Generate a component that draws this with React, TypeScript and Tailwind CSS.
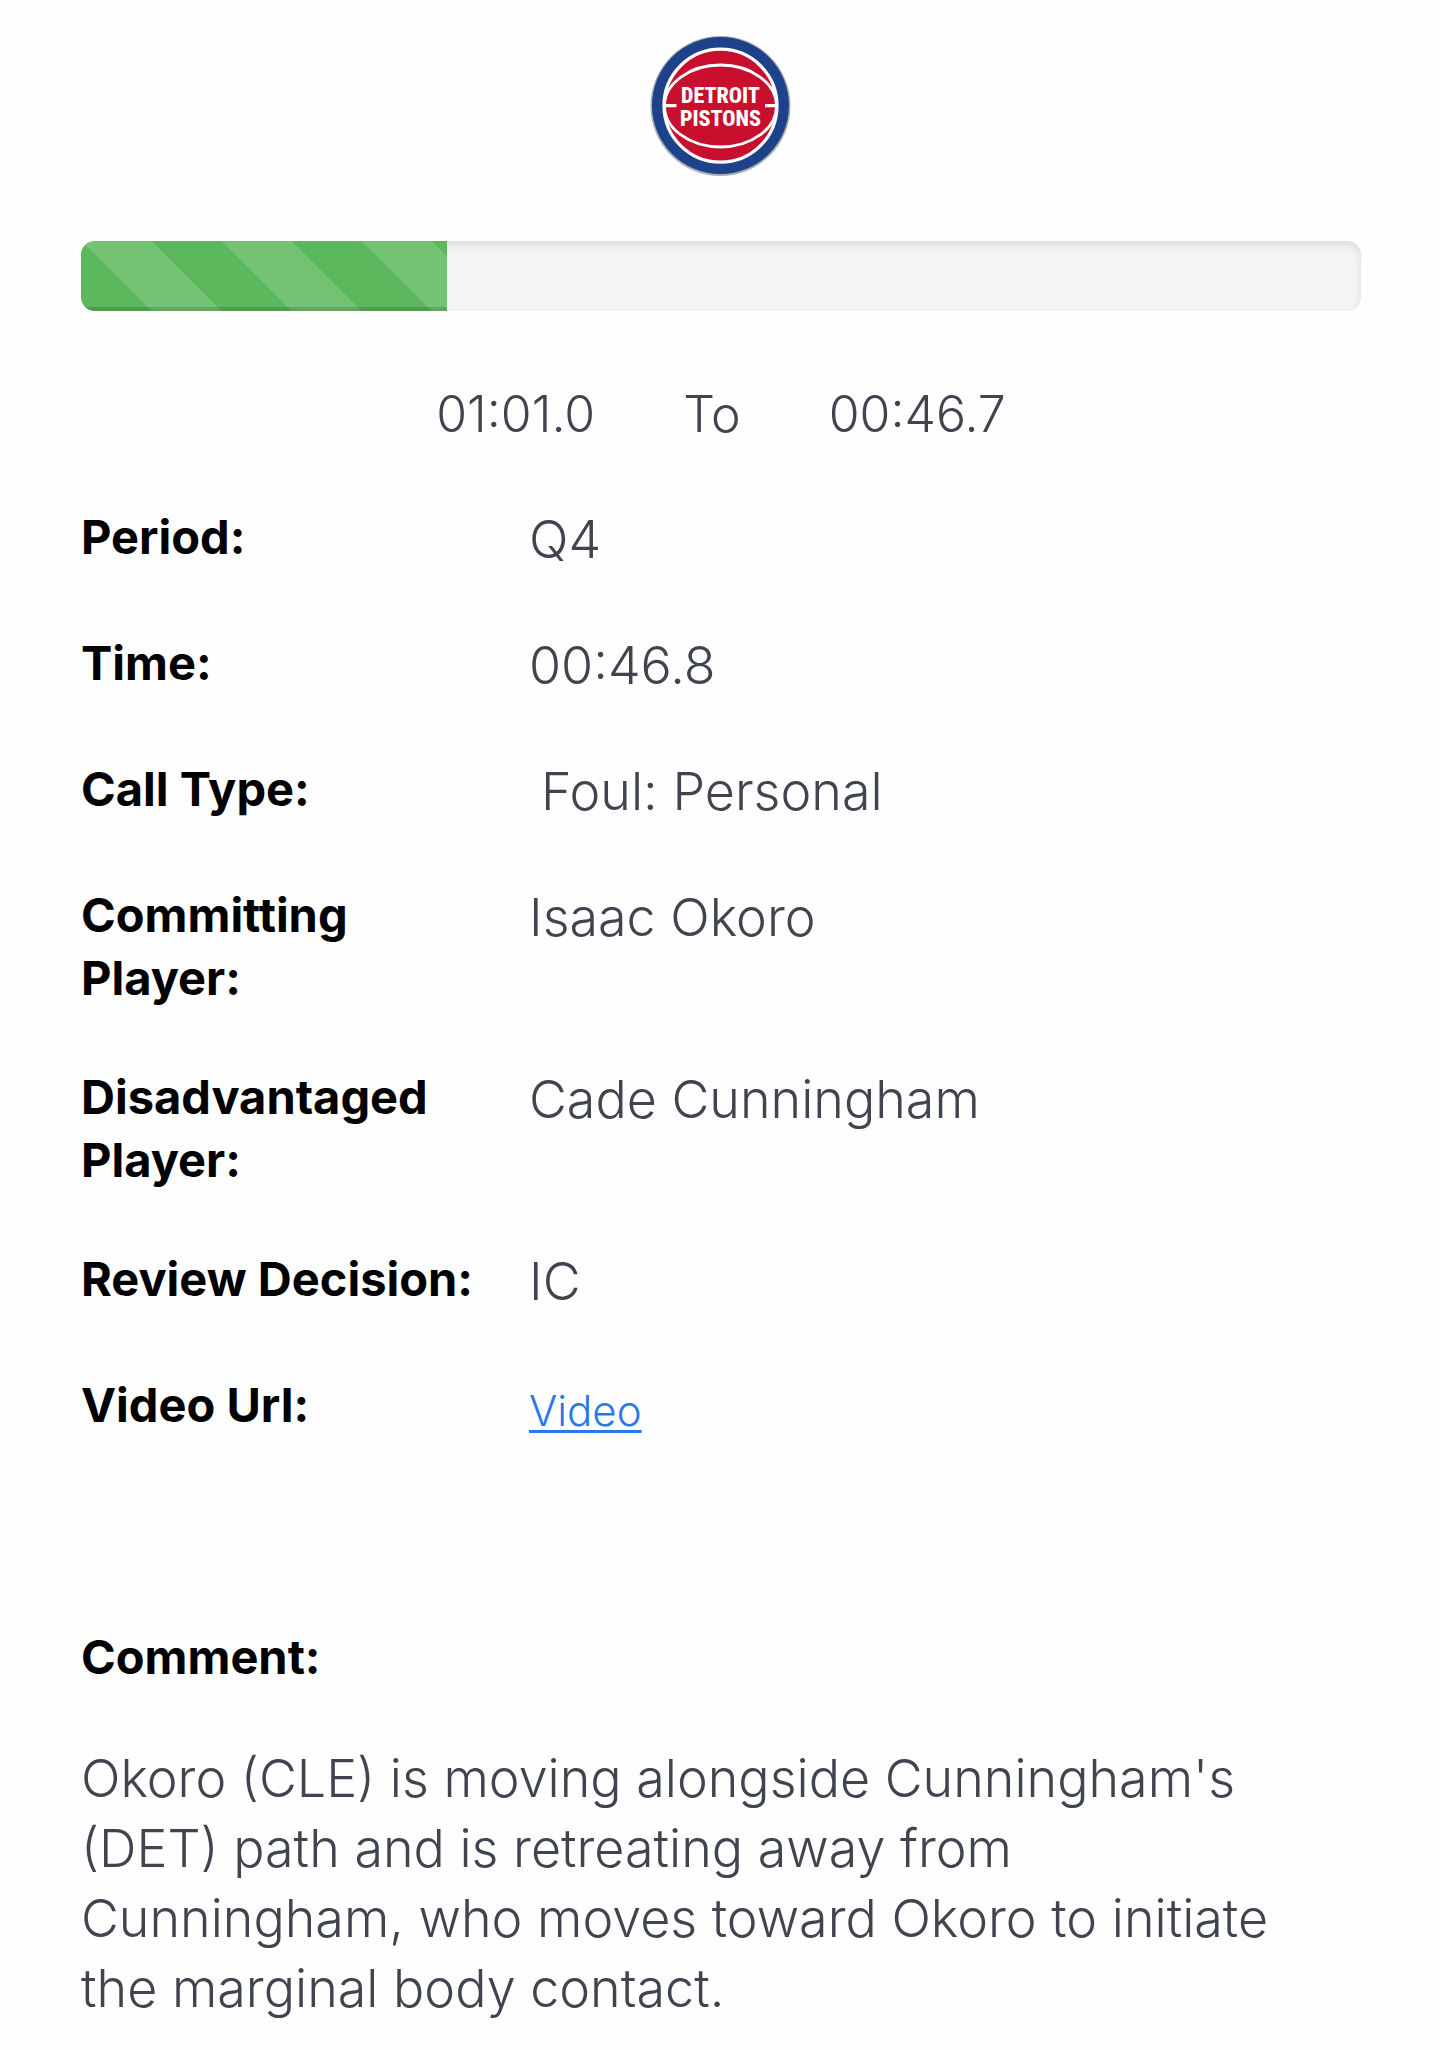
import type { ReactNode } from "react";

const progress = 28.6;

function PistonsLogo() {
  return (
    <svg viewBox="1 0 160 160" className="size-40" role="img" aria-label="Detroit Pistons">
      <circle cx="80.5" cy="81" r="70" fill="#a9adb3" />
      <circle cx="80.5" cy="80.5" r="68.5" fill="#1d428a" />
      <circle cx="80.5" cy="80.7" r="56.5" fill="#c8102e" stroke="#fff" strokeWidth="3.2" />
      <ellipse cx="80.5" cy="81" rx="56" ry="41" fill="none" stroke="#fff" strokeWidth="2.8" />
      <path d="M24 80.7h12.5M125 80.7h12.5" stroke="#fff" strokeWidth="3.2" />
      <text
        fill="#fff"
        fontSize="22"
        fontWeight="800"
        textAnchor="middle"
        fontFamily="'Roboto Condensed', 'Liberation Sans Narrow', 'Liberation Sans', sans-serif"
      >
        <tspan x="80.5" y="78">
          DETROIT
        </tspan>
        <tspan x="80.5" y="101">
          PISTONS
        </tspan>
      </text>
    </svg>
  );
}

function Row({ label, children }: { label: string; children: ReactNode }) {
  return (
    <div className="grid grid-cols-[35%_1fr]">
      <dt className="pr-10 text-[47px]/[63px] font-bold text-black">{label}</dt>
      <dd>{children}</dd>
    </div>
  );
}

export default function App() {
  return (
    <main className="min-h-screen bg-[#fefefe] pr-[79px] pb-6 pl-[81px] font-['Inter',sans-serif] text-[52px]/[70px] font-light text-[#40444f]">
      <header className="flex justify-center pt-[25px]">
        <PistonsLogo />
      </header>

      <div
        role="progressbar"
        aria-label="Period progress"
        aria-valuenow={progress}
        aria-valuemin={0}
        aria-valuemax={100}
        className="mt-14 h-[70px] overflow-hidden rounded-[14px] bg-[#f4f4f4] shadow-[inset_0_4px_8px_rgba(0,0,0,0.1)]"
      >
        <div
          className="h-full bg-[#5cb85c] bg-[linear-gradient(45deg,rgba(255,255,255,0.15)_25%,transparent_25%,transparent_50%,rgba(255,255,255,0.15)_50%,rgba(255,255,255,0.15)_75%,transparent_75%,transparent)] bg-[length:140px_140px] shadow-[inset_0_-4px_0_rgba(0,0,0,0.15)]"
          style={{ width: `${progress}%` }}
        />
      </div>

      <div className="mt-[68px] flex justify-center gap-[88px] text-[50px]/[70px]">
        <span>01:01.0</span>
        <span>To</span>
        <span>00:46.7</span>
      </div>

      <dl className="mt-14 flex flex-col gap-14">
        <Row label="Period:">Q4</Row>
        <Row label="Time:">00:46.8</Row>
        <Row label="Call Type:">
          <span className="pl-3">Foul: Personal</span>
        </Row>
        <Row label="Committing Player:">Isaac Okoro</Row>
        <Row label="Disadvantaged Player:">Cade Cunningham</Row>
        <Row label="Review Decision:">IC</Row>
        <Row label="Video Url:">
          <a
            href="#video"
            className="text-[42px] leading-none text-[#2878eb] underline decoration-3 underline-offset-4"
          >
            Video
          </a>
        </Row>
      </dl>

      <section className="mt-[182px]">
        <h2 className="text-[47px]/[63px] font-bold text-black">Comment:</h2>
        <p className="mt-14">
          Okoro (CLE) is moving alongside Cunningham's
          <br />
          (DET) path and is retreating away from
          <br />
          Cunningham, who moves toward Okoro to initiate
          <br />
          the marginal body contact.
        </p>
      </section>
    </main>
  );
}
